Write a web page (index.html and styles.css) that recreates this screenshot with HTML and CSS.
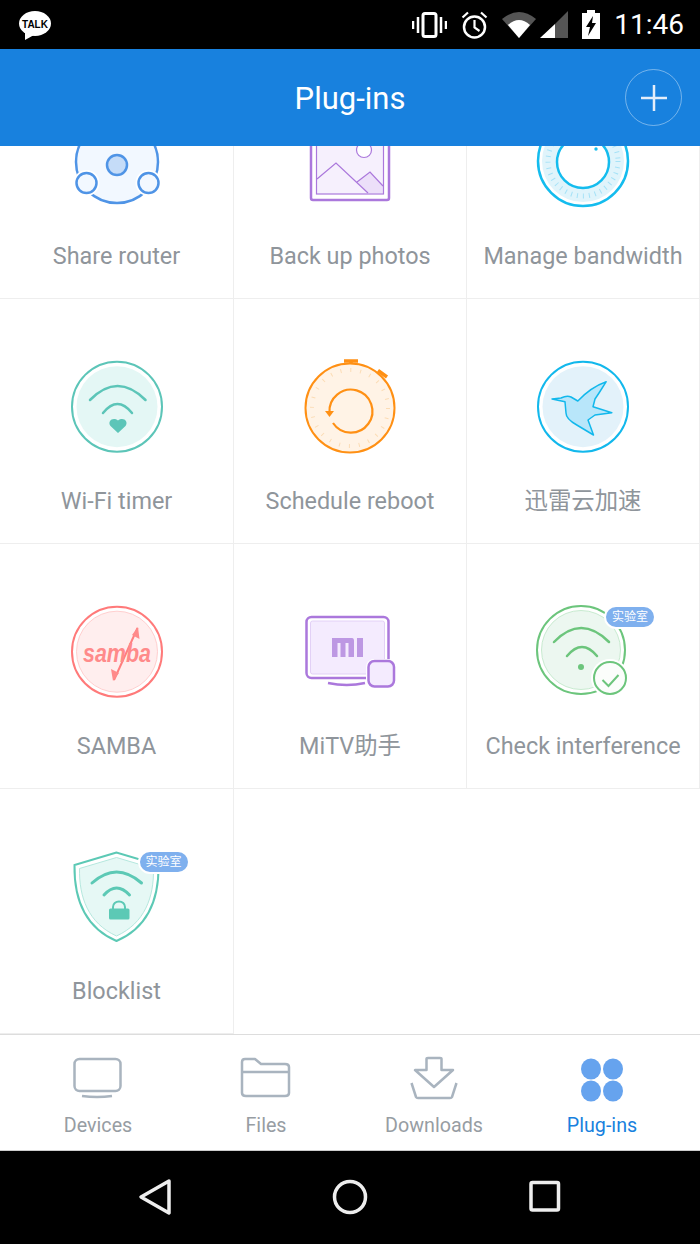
FILE: index.html
```html
<!DOCTYPE html>
<html lang="en">
<head>
    <meta charset="UTF-8">
    <meta name="viewport" content="width=device-width, initial-scale=1.0">
    <title>Plug-ins</title>
    <link rel="stylesheet" href="styles.css">
</head>
<body>
    <div class="status-bar">
        <svg class="talk" width="32" height="29" viewBox="0 0 32 29">
            <ellipse cx="16" cy="12.5" rx="16" ry="12.5" fill="#fff"/>
            <path d="M6 21 L6 29 L15 24 Z" fill="#fff"/>
            <text x="16" y="16.500" text-anchor="middle" class="talk-text">TALK</text>
        </svg>
        <svg width="35" height="26" viewBox="0 0 35 26">
            <rect x="11" y="1.500" width="13" height="23" rx="2" fill="none" stroke="#fff" stroke-width="3"/>
            <path d="M1 9 V17 M6 5 V21 M29 5 V21 M34 9 V17" stroke="#fff" stroke-width="2.500"/>
        </svg>
        <svg width="27" height="28" viewBox="0 0 27 28">
            <circle cx="13.500" cy="16" r="10.500" fill="none" stroke="#fff" stroke-width="2.500"/>
            <path d="M13.500 9 V16.500 L18.500 20 M1.500 6.500 L7 1.500 M25.500 6.500 L20 1.500" fill="none" stroke="#fff" stroke-width="2.200"/>
        </svg>
        <div class="signal-group">
            <svg width="34" height="26" viewBox="0 0 34 26">
                <path d="M0 7 Q17 -7 34 7 L17 26 Z" fill="#555"/>
                <path d="M6 13 Q17 3 28 13 L17 26 Z" fill="#fff"/>
            </svg>
            <svg width="28" height="27" viewBox="0 0 28 27">
                <path d="M15 13 L28 0 V27 H15 Z" fill="#555"/>
                <path d="M0 27 L15 13 V27 Z" fill="#fff"/>
            </svg>
        </div>
        <svg width="18" height="29" viewBox="0 0 18 29">
            <path d="M5 0 H13 V3 H18 V29 H0 V3 H5 Z" fill="#fff"/>
            <path d="M11 6 L4 17 H8 L6 26 L14 13 H10 Z" fill="#000"/>
        </svg>
        <span class="clock">11:46</span>
    </div>

    <header class="app-bar">
        <span></span>
        <h1>Plug-ins</h1>
        <div class="add-btn">
            <svg width="26" height="26" viewBox="0 0 26 26">
                <path d="M13 0 V26 M0 13 H26" stroke="#e4eefa" stroke-width="2.500"/>
            </svg>
        </div>
    </header>

    <main class="content">
        <div class="plugin-grid">
            <div class="cell">
                <div class="icon">
                    <svg width="100" height="100" viewBox="0 0 100 100">
                        <circle cx="50" cy="50" r="41" fill="#f2f8ff" stroke="#4f94e6" stroke-width="2.500"/>
                        <circle cx="50" cy="53" r="10" fill="#c5dcf8" stroke="#4f94e6" stroke-width="2.500"/>
                        <circle cx="19.500" cy="71" r="13" fill="#fff"/>
                        <circle cx="81.500" cy="71" r="13" fill="#fff"/>
                        <circle cx="19.500" cy="71" r="10" fill="#f2f8ff" stroke="#4f94e6" stroke-width="2.500"/>
                        <circle cx="81.500" cy="71" r="10" fill="#f2f8ff" stroke="#4f94e6" stroke-width="2.500"/>
                    </svg>
                </div>
                <div class="label">Share router</div>
            </div>
            <div class="cell">
                <div class="icon">
                    <svg width="100" height="100" viewBox="0 0 100 100">
                        <rect x="11" y="10" width="78" height="78" rx="2" fill="#fff" stroke="#ab78dc" stroke-width="2.500"/>
                        <rect x="16.500" y="15" width="67" height="67" fill="#f6f0fd"/>
                        <path d="M70 60 L83 74 V81 H68 L57 70 Z" fill="#ecdff9"/>
                        <rect x="16.500" y="15" width="67" height="67" fill="none" stroke="#ab78dc" stroke-width="1.200"/>
                        <circle cx="64" cy="38" r="7.500" fill="#fff" stroke="#ab78dc" stroke-width="1.200"/>
                        <path d="M17 67 L36 51 L68 81 M57 70 L70 60 L83 74" fill="none" stroke="#ab78dc" stroke-width="1.200"/>
                    </svg>
                </div>
                <div class="label">Back up photos</div>
            </div>
            <div class="cell">
                <div class="icon">
                    <svg width="100" height="100" viewBox="0 0 100 100">
                        <circle cx="50" cy="49" r="45" fill="#fff" stroke="#14bcee" stroke-width="2.500"/>
                        <circle cx="50" cy="49" r="41" fill="#e0f4fb"/>
                        <circle cx="50" cy="49" r="35" fill="none" stroke="#a6e2f7" stroke-width="5" stroke-dasharray="1 5"/>
                        <circle cx="50" cy="50" r="26" fill="#fff" stroke="#14bcee" stroke-width="2.500"/>
                        <circle cx="63" cy="37" r="1.700" fill="#14bcee"/>
                    </svg>
                </div>
                <div class="label">Manage bandwidth</div>
            </div>

            <div class="cell">
                <div class="icon">
                    <svg width="100" height="100" viewBox="0 0 100 100">
                        <circle cx="50" cy="49.700" r="45" fill="#fff" stroke="#5cc5b8" stroke-width="2"/>
                        <circle cx="50" cy="49.700" r="40.500" fill="#e4f7f5"/>
                        <path d="M23 43 Q50.500 15 78.500 43 M36 56 Q50.500 38 65 56" fill="none" stroke="#5cc5b8" stroke-width="2.500" stroke-linecap="round"/>
                        <path d="M51 76 L43.500 69 C40 64 46 59.500 51 63.500 C56 59.500 62 64 58.500 69 Z" fill="#5cc5b8"/>
                    </svg>
                </div>
                <div class="label">Wi-Fi timer</div>
            </div>
            <div class="cell">
                <div class="icon">
                    <svg width="100" height="100" viewBox="0 0 100 100">
                        <circle cx="50" cy="51" r="44.500" fill="#fff3e6" stroke="#ff9014" stroke-width="2"/>
                        <circle cx="50" cy="51" r="38" fill="none" stroke="#fbdcb5" stroke-width="4" stroke-dasharray="1 8.950"/>
                        <path d="M44 4 H58 M51 4 V7 M78 13.500 L87 20" fill="none" stroke="#ff9014" stroke-width="3.500"/>
                        <path d="M29.500 56 A21.500 21.500 0 1 1 33 66" fill="none" stroke="#ff9014" stroke-width="2.200"/>
                        <path d="M25 54 H34 L29.500 60 Z" fill="#ff9014"/>
                    </svg>
                </div>
                <div class="label">Schedule reboot</div>
            </div>
            <div class="cell">
                <div class="icon">
                    <svg width="100" height="100" viewBox="0 0 100 100">
                        <circle cx="50" cy="49.700" r="45" fill="#fff" stroke="#12b8ec" stroke-width="2"/>
                        <circle cx="50" cy="49.700" r="40.500" fill="#e3f2fa"/>
                        <path d="M19 42 L28 41 Q34 38 38 40 L44.800 44 Q58 30 73.200 24.700 L66 36 L62 42 L60 49.700 L78.800 55.700 L62 58 L55 63 L60.500 78 L43.800 68 Q33 62 33 56 L32 44.700 Z" fill="#b8e6fa" stroke="#12b8ec" stroke-width="1.500" stroke-linejoin="round"/>
                    </svg>
                </div>
                <div class="label">迅雷云加速</div>
            </div>

            <div class="cell">
                <div class="icon">
                    <svg width="100" height="100" viewBox="0 0 100 100">
                        <circle cx="50" cy="49.700" r="45" fill="#fff" stroke="#ff7a7a" stroke-width="2"/>
                        <circle cx="50" cy="49.700" r="40.500" fill="#ffeeee" stroke="#ffcfcf" stroke-width="1"/>
                        <path d="M70.500 26 L47 78" stroke="#ff7f7f" stroke-width="2"/>
                        <path d="M71 25 L72.500 37 L65 33 Z M46 79 L44 67 L52 71 Z" fill="#ff8a8a"/>
                        <text x="50" y="60" text-anchor="middle" textLength="68" lengthAdjust="spacingAndGlyphs" class="samba-text">samba</text>
                    </svg>
                </div>
                <div class="label">SAMBA</div>
            </div>
            <div class="cell">
                <div class="icon">
                    <svg width="100" height="100" viewBox="0 0 100 100">
                        <rect x="6.500" y="15" width="82" height="61" rx="5" fill="#fff" stroke="#ab78dc" stroke-width="2.500"/>
                        <rect x="10.500" y="19" width="74" height="53" rx="2" fill="#f4ebfe" stroke="#e2d0f6" stroke-width="1"/>
                        <path d="M32 36 H52 Q54 36 54 39 V55 H48.500 V41 H45.500 V55 H40.500 V41 H37.500 V55 H32 Z M57 36 H63 V55 H57 Z" fill="#bd98e3"/>
                        <path d="M28 81 Q47 85 65 81" fill="none" stroke="#ab78dc" stroke-width="2.500"/>
                        <rect x="66" y="57" width="30" height="30" rx="8" fill="#fff"/>
                        <rect x="68.500" y="59" width="25.500" height="25.500" rx="6" fill="#f4ebfe" stroke="#ab78dc" stroke-width="2.500"/>
                    </svg>
                </div>
                <div class="label">MiTV助手</div>
            </div>
            <div class="cell">
                <div class="icon">
                    <svg width="100" height="100" viewBox="0 0 100 100">
                        <circle cx="48" cy="48" r="44" fill="#fff" stroke="#6cc57c" stroke-width="2"/>
                        <circle cx="48" cy="48" r="39.500" fill="#ecf7f0" stroke="#c8ebd0" stroke-width="1"/>
                        <path d="M21 40 Q48 12 76 40 M34 54 Q49 36 64 54" fill="none" stroke="#6cc57c" stroke-width="2.500" stroke-linecap="round"/>
                        <circle cx="48" cy="65" r="3" fill="#6cc57c"/>
                        <circle cx="77" cy="76" r="19" fill="#fff"/>
                        <circle cx="77" cy="76" r="16" fill="#fbfdfb" stroke="#6cc57c" stroke-width="2"/>
                        <path d="M69.500 78 L75.500 84 L85.500 73" fill="none" stroke="#6cc57c" stroke-width="2"/>
                    </svg>
                    <span class="lab-badge">实验室</span>
                </div>
                <div class="label">Check interference</div>
            </div>

            <div class="cell">
                <div class="icon">
                    <svg width="100" height="100" viewBox="0 0 100 100">
                        <path d="M49.500 5.500 L7.500 18 C7 50 17 80 49.500 94 C82 80 92 50 91.500 18 Z" fill="#fff" stroke="#5cc9b5" stroke-width="2"/>
                        <path d="M49.500 10.500 L12.500 21.500 C12 50 21 76 49.500 89 C78 76 87 50 86.500 21.500 Z" fill="#e6f8f5" stroke="#b5e8de" stroke-width="1"/>
                        <path d="M25 36 Q49.500 14 74.500 36 M37 48 Q49.500 34 62.500 48" fill="none" stroke="#5cc9b5" stroke-width="3" stroke-linecap="round"/>
                        <path d="M46 62 V60 A6 5.500 0 0 1 58 60 V62" fill="none" stroke="#5cc9b5" stroke-width="2"/>
                        <rect x="42" y="61.500" width="20.500" height="11" rx="1.500" fill="#5cc9b5"/>
                    </svg>
                    <span class="lab-badge">实验室</span>
                </div>
                <div class="label">Blocklist</div>
            </div>
        </div>
    </main>

    <nav class="tabs">
        <div class="tab">
            <svg width="56" height="48" viewBox="1 2 56 48">
                <rect x="5.500" y="6" width="46" height="32" rx="5" fill="none" stroke="#a9b4bf" stroke-width="2.500"/>
                <path d="M13 43 Q28 45 43 43" fill="none" stroke="#a9b4bf" stroke-width="2.500"/>
            </svg>
            <span>Devices</span>
        </div>
        <div class="tab">
            <svg width="56" height="48" viewBox="1 1 56 48">
                <path d="M5 18 V8 Q5 5 8 5 H18 L24 10 H48 Q52 10 52 13 V39 Q52 42 48 42 H9 Q5 42 5 39 Z M5 18 H52" fill="none" stroke="#a9b4bf" stroke-width="2.500" stroke-linejoin="round"/>
            </svg>
            <span>Files</span>
        </div>
        <div class="tab">
            <svg width="56" height="48" viewBox="0 1 56 48">
                <path d="M20.500 16 V5 Q20.500 4 22 4 H34 Q35.500 4 35.500 5 V16 H47 L28 33 L9 16 Z" fill="none" stroke="#a9b4bf" stroke-width="2.500" stroke-linejoin="round"/>
                <path d="M5.500 29 L10 43 Q10.500 44 12 44 H44 Q45.500 44 46 43 L50.500 29" fill="none" stroke="#a9b4bf" stroke-width="2.500"/>
            </svg>
            <span>Downloads</span>
        </div>
        <div class="tab active">
            <svg width="56" height="48" viewBox="0 1 56 48">
                <ellipse cx="17" cy="15" rx="10" ry="10.500" fill="#66a3ee"/>
                <ellipse cx="39" cy="15" rx="10" ry="10.500" fill="#66a3ee"/>
                <ellipse cx="17" cy="37" rx="10" ry="10.500" fill="#66a3ee"/>
                <ellipse cx="39" cy="37" rx="10" ry="10.500" fill="#66a3ee"/>
            </svg>
            <span>Plug-ins</span>
        </div>
    </nav>

    <div class="nav-bar">
        <svg width="40" height="40" viewBox="0 0 40 40">
            <path d="M34 4 L6 20 L34 36 Z" fill="none" stroke="#eee" stroke-width="3.500" stroke-linejoin="round"/>
        </svg>
        <svg width="40" height="40" viewBox="0 0 40 40">
            <circle cx="20" cy="20" r="15.500" fill="none" stroke="#eee" stroke-width="3.500"/>
        </svg>
        <svg width="40" height="40" viewBox="0 0 40 40">
            <rect x="6" y="5.500" width="27.500" height="27.500" rx="1.500" fill="none" stroke="#eee" stroke-width="3.500"/>
        </svg>
    </div>
</body>
</html>
```

FILE: styles.css
```css
* {
    box-sizing: border-box;
}
body {
    margin: 0;
    height: 1244px;
    display: flex;
    flex-direction: column;
    background-color: #fff;
    font-family: Roboto, 'Noto Sans CJK SC', sans-serif;
    overflow: hidden;
}
svg {
    display: block;
    flex-shrink: 0;
}
.status-bar {
    height: 49px;
    flex-shrink: 0;
    display: flex;
    align-items: center;
    gap: 14px;
    padding: 0 16px 0 19px;
    background-color: #000;
}
.talk {
    margin-right: auto;
    margin-top: 1px;
}
.talk-text {
    font-family: 'Liberation Sans', sans-serif;
    font-size: 10px;
    font-weight: 700;
    fill: #000;
}
.signal-group {
    display: flex;
    align-items: center;
    gap: 4px;
}
.clock {
    color: #fff;
    font-size: 28px;
    line-height: 49px;
}
.app-bar {
    height: 97px;
    flex-shrink: 0;
    display: grid;
    grid-template-columns: 1fr auto 1fr;
    align-items: center;
    padding: 0 18px;
    background-color: #1881de;
}
.app-bar h1 {
    margin: 0;
    padding-top: 2px;
    color: #fff;
    font-size: 31px;
    font-weight: 400;
}
.add-btn {
    justify-self: end;
    width: 57px;
    height: 57px;
    display: flex;
    align-items: center;
    justify-content: center;
    border: 1px solid rgba(255, 255, 255, 0.4);
    border-radius: 50%;
}
.content {
    height: 888px;
    flex-shrink: 0;
    overflow: hidden;
}
.plugin-grid {
    margin-top: -92px;
    display: grid;
    grid-template-columns: 234px 233px 233px;
    grid-auto-rows: 245px;
}
.cell {
    display: flex;
    flex-direction: column;
    align-items: center;
    padding-top: 58px;
    border-right: 1px solid #eee;
    border-bottom: 1px solid #eee;
}
.icon {
    position: relative;
    width: 100px;
    height: 100px;
}
.label {
    margin-top: 28px;
    color: #8f959b;
    font-size: 23.4px;
    line-height: 32px;
    white-space: nowrap;
}
.lab-badge {
    position: absolute;
    left: 71px;
    top: 3px;
    padding: 0 6px;
    height: 24px;
    line-height: 20px;
    border: 2px solid #fff;
    border-radius: 12px;
    background-color: #7fb0ee;
    color: #fff;
    font-size: 12px;
    white-space: nowrap;
}
.samba-text {
    font-family: 'Liberation Sans', sans-serif;
    font-size: 26px;
    font-weight: 700;
    font-style: italic;
    fill: #ff8a8a;
}
.tabs {
    height: 117px;
    flex-shrink: 0;
    display: grid;
    grid-template-columns: repeat(4, 168px);
    padding: 20px 0 0 14px;
    border-top: 1px solid #ddd;
    border-bottom: 1px solid #ccc;
    background-color: #fff;
}
.tab {
    display: flex;
    flex-direction: column;
    align-items: center;
    gap: 11px;
    color: #979da3;
    font-size: 19.7px;
    line-height: 24px;
}
.tab.active {
    color: #1881de;
}
.nav-bar {
    height: 93px;
    flex-shrink: 0;
    display: grid;
    grid-template-columns: repeat(3, 195px);
    justify-content: center;
    justify-items: center;
    align-items: center;
    padding-bottom: 2px;
    background-color: #000;
}
```
